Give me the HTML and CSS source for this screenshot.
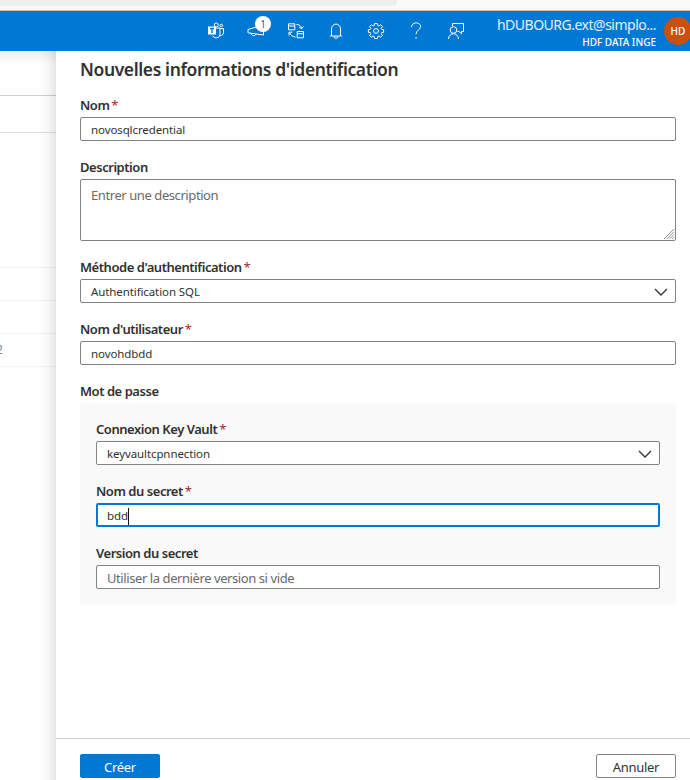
FILE: index.html
```html
<!DOCTYPE html>
<html lang="fr">
<head>
<meta charset="utf-8">
<title>Nouvelles informations d'identification</title>
<link rel="stylesheet" href="styles.css">
</head>
<body>
<div class="browser"><div class="address"></div></div>
<header class="topbar">
  <nav class="tools">
    <span class="tool"><svg viewBox="0 0 18 18"><path d="M1 4.500h8v8H1z" fill="#fff" stroke="none"/><path d="M3 6.500h4M5 6.500v4.500" stroke="#0078d4" stroke-width="1.4"/><circle cx="9.300" cy="3" r="2"/><circle cx="14.300" cy="3.500" r="1.300"/><path d="M9 6h4v6.500a3.900 3.900 0 0 1-7.500 1M13 6.500h3.500v4.300a2.600 2.600 0 0 1-3.400 2.500"/></svg></span>
    <span class="tool"><svg viewBox="0 0 18 18"><path d="M1 7.500 16.500 3v10L1 10.800zM4 11.300c0 3 4.500 3 5 .8"/></svg><span class="badge">1</span></span>
    <span class="tool"><svg viewBox="0 0 18 18"><path d="M1.500 1.800h6.300v6H1.500zM1.500 4h6.300M10.200 9.500h6.300v6.300h-6.300zM10.200 11.700h6.300M9.500 2.500c3 0 4.700 1.300 5 4M12 4.800l2.500 2 2-2.300M8.500 15c-3.500-.3-5-2-6-4.500M2 13.500v-3.300h3.300"/></svg></span>
    <span class="tool"><svg viewBox="0 0 18 18"><path d="M3 14h12M4.500 14V7a4.500 4.900 0 0 1 9 0v7M7 14.300a2 2 0 0 0 4 0"/></svg></span>
    <span class="tool"><svg viewBox="0 0 18 18"><path d="M7.600 1.500h2.800l.4 2 1.100.5 1.800-1.200 1.700 1.700L14.200 6.300l.5 1.100 1.900.3v2.600l-1.900.3-.5 1.100 1.200 1.800-1.700 1.700-1.800-1.200-1.100.5-.4 2H7.600l-.4-2-1.100-.5-1.800 1.200-1.700-1.700 1.200-1.800-.5-1.100-1.900-.3V7.700l1.900-.3.5-1.100-1.200-1.800 1.700-1.700L6.100 4l1.100-.5z"/><circle cx="9" cy="9" r="2.400"/></svg></span>
    <span class="tool"><svg viewBox="0 0 18 18"><path d="M4.500 5.200c0-5.600 9-5.600 9-.7 0 3.700-4.500 3.500-4.500 7.700M9 15v1.800"/></svg></span>
    <span class="tool"><svg viewBox="0 0 18 18"><path d="M5.500 4V1.500h11v8h-2v2.300L12 9.500h-1.500M1.500 17c.3-7 9.700-7 10 0"/><circle cx="6.500" cy="8" r="3.300"/></svg></span>
  </nav>
  <div class="account">
    <div class="mail">hDUBOURG.ext@simplo...</div>
    <div class="tenant">HDF DATA INGE</div>
  </div>
  <div class="avatar">HD</div>
</header>
<main class="content">
  <aside class="behind">
    <div class="line first"></div>
    <div class="line second"></div>
    <div class="line third"></div>
    <div class="line row"></div>
    <div class="line row"></div>
    <div class="line row value"><span>2</span></div>
  </aside>
  <section class="panel">
    <div class="form">
      <h1>Nouvelles informations d'identification</h1>
      <div class="group"><div class="label">Nom <i>*</i></div><div class="field"><span>novosqlcredential</span></div></div>
      <div class="group"><div class="label">Description</div><div class="field area"><span class="hint">Entrer une description</span><svg class="grip" viewBox="0 0 11 11"><path d="M0 11 11 0M3 11l8-8M6 11l5-5M9 11l2-2"/></svg></div></div>
      <div class="group"><div class="label">Méthode d'authentification <i>*</i></div><div class="field"><span>Authentification SQL</span><svg class="chevron" viewBox="0 0 14 8"><path d="m1 1 6 6 6-6"/></svg></div></div>
      <div class="group"><div class="label">Nom d'utilisateur <i>*</i></div><div class="field"><span>novohdbdd</span></div></div>
      <div class="label">Mot de passe</div>
      <div class="secret">
        <div class="group"><div class="label">Connexion Key Vault <i>*</i></div><div class="field"><span>keyvaultcpnnection</span><svg class="chevron" viewBox="0 0 14 8"><path d="m1 1 6 6 6-6"/></svg></div></div>
        <div class="group"><div class="label">Nom du secret <i>*</i></div><div class="field focused"><span>bdd</span><b class="caret"></b></div></div>
        <div class="group"><div class="label">Version du secret</div><div class="field"><span class="hint">Utiliser la dernière version si vide</span></div></div>
      </div>
    </div>
    <footer class="actions">
      <div class="btn primary">Créer</div>
      <div class="btn">Annuler</div>
    </footer>
  </section>
</main>
</body>
</html>
```
FILE: styles.css
```css
* { box-sizing: border-box; }
body {
  margin: 0;
  width: 690px;
  height: 780px;
  overflow: hidden;
  display: flex;
  flex-direction: column;
  background: #fff;
  color: #323130;
  font-family: "Noto Sans", "Open Sans", sans-serif;
  font-size: 13px;
}
svg { display: block; fill: none; stroke: currentColor; }
.browser { height: 11px; flex: none; background: #fafafa; border-bottom: 1px solid #c3c3c0; }
.address { width: 397px; height: 6px; background: #ededed; border-radius: 0 0 4px 0; }
.topbar {
  height: 40px;
  flex: none;
  display: flex;
  align-items: center;
  background: #0078d4;
  color: #fff;
}
.tools { display: flex; flex: none; margin-left: 196px; }
.tool { position: relative; width: 40px; height: 40px; display: flex; align-items: center; justify-content: center; }
.tool svg { width: 18px; height: 18px; }
.badge {
  position: absolute;
  left: 19px;
  top: 5px;
  width: 16px;
  height: 16px;
  border-radius: 50%;
  background: #fff;
  color: #555;
  font-size: 10px;
  line-height: 16px;
  text-align: center;
}
.account { width: 180px; flex: none; padding-top: 4px; text-align: right; white-space: nowrap; }
.mail { font-size: 14px; line-height: 18px; letter-spacing: -.5px; color: #e3f0fa; }
.tenant { font-size: 10px; line-height: 16px; font-weight: 500; }
.avatar {
  width: 28px;
  height: 28px;
  flex: none;
  margin-left: 8px;
  border-radius: 50%;
  background: #ca5010;
  font-size: 10px;
  font-weight: 500;
  line-height: 28px;
  text-align: center;
}
.content { flex: 1; display: flex; min-height: 0; }
.behind {
  width: 56px;
  flex: none;
  background: linear-gradient(to bottom, rgba(0,0,0,.07), transparent 14px), linear-gradient(to right, transparent 38px, rgba(0,0,0,.025) 47px, rgba(0,0,0,.1));
}
.line { border-bottom: 1px solid rgba(0,0,0,.05); }
.first { height: 45px; border-color: rgba(0,0,0,.18); }
.second { height: 37px; border-color: rgba(0,0,0,.13); }
.third { height: 135px; }
.row { height: 33px; }
.value { overflow: hidden; color: #888; line-height: 32px; font-size: 12px; }
.value span { margin-left: -4px; }
.panel { flex: 1; display: flex; flex-direction: column; background: #fff; }
.form { flex: 1; padding: 4px 14px 0 24px; }
h1 { margin: 0 0 12px; font-size: 17.500px; line-height: 28px; font-weight: 600; letter-spacing: -.39px; white-space: nowrap; }
.group { margin-bottom: 16px; }
.label { height: 22px; line-height: 20px; font-size: 13px; font-weight: 600; letter-spacing: -.46px; white-space: nowrap; }
.label i { color: #a4262c; font-style: normal; font-weight: 400; margin-left: -1px; }
.field {
  height: 24px;
  display: flex;
  align-items: center;
  padding: 2px 7px 0 10px;
  border: 1px solid #858381;
  border-radius: 2px;
  background: #fff;
  font-size: 11.500px;
  letter-spacing: -.1px;
  line-height: 20px;
}
.hint { color: #6b6968; font-size: 13px; letter-spacing: -.42px; }
.area { height: 62px; position: relative; align-items: flex-start; padding-top: 5px; }
.grip { position: absolute; right: 1px; bottom: 1px; width: 10px; height: 10px; color: #888; }
.chevron { width: 14px; height: 8px; margin-left: auto; stroke-width: 1.300; }
.focused { border: 2px solid #0078d4; padding: 2px 8px 0 9px; }
.caret { width: 1px; height: 17px; background: #111; }
.secret { padding: 16px; background: #f9f9f9; }
.secret .group:last-child { margin-bottom: 0; }
.actions { height: 42px; flex: none; display: flex; justify-content: space-between; padding: 15px 14px 0 24px; border-top: 1px solid #d2d0ce; }
.btn { width: 80px; height: 24px; border: 1px solid #858381; border-radius: 2px; font-size: 13px; line-height: 25px; letter-spacing: -.3px; text-align: center; }
.primary { background: #0078d4; border-color: #0078d4; color: #fff; }
```
